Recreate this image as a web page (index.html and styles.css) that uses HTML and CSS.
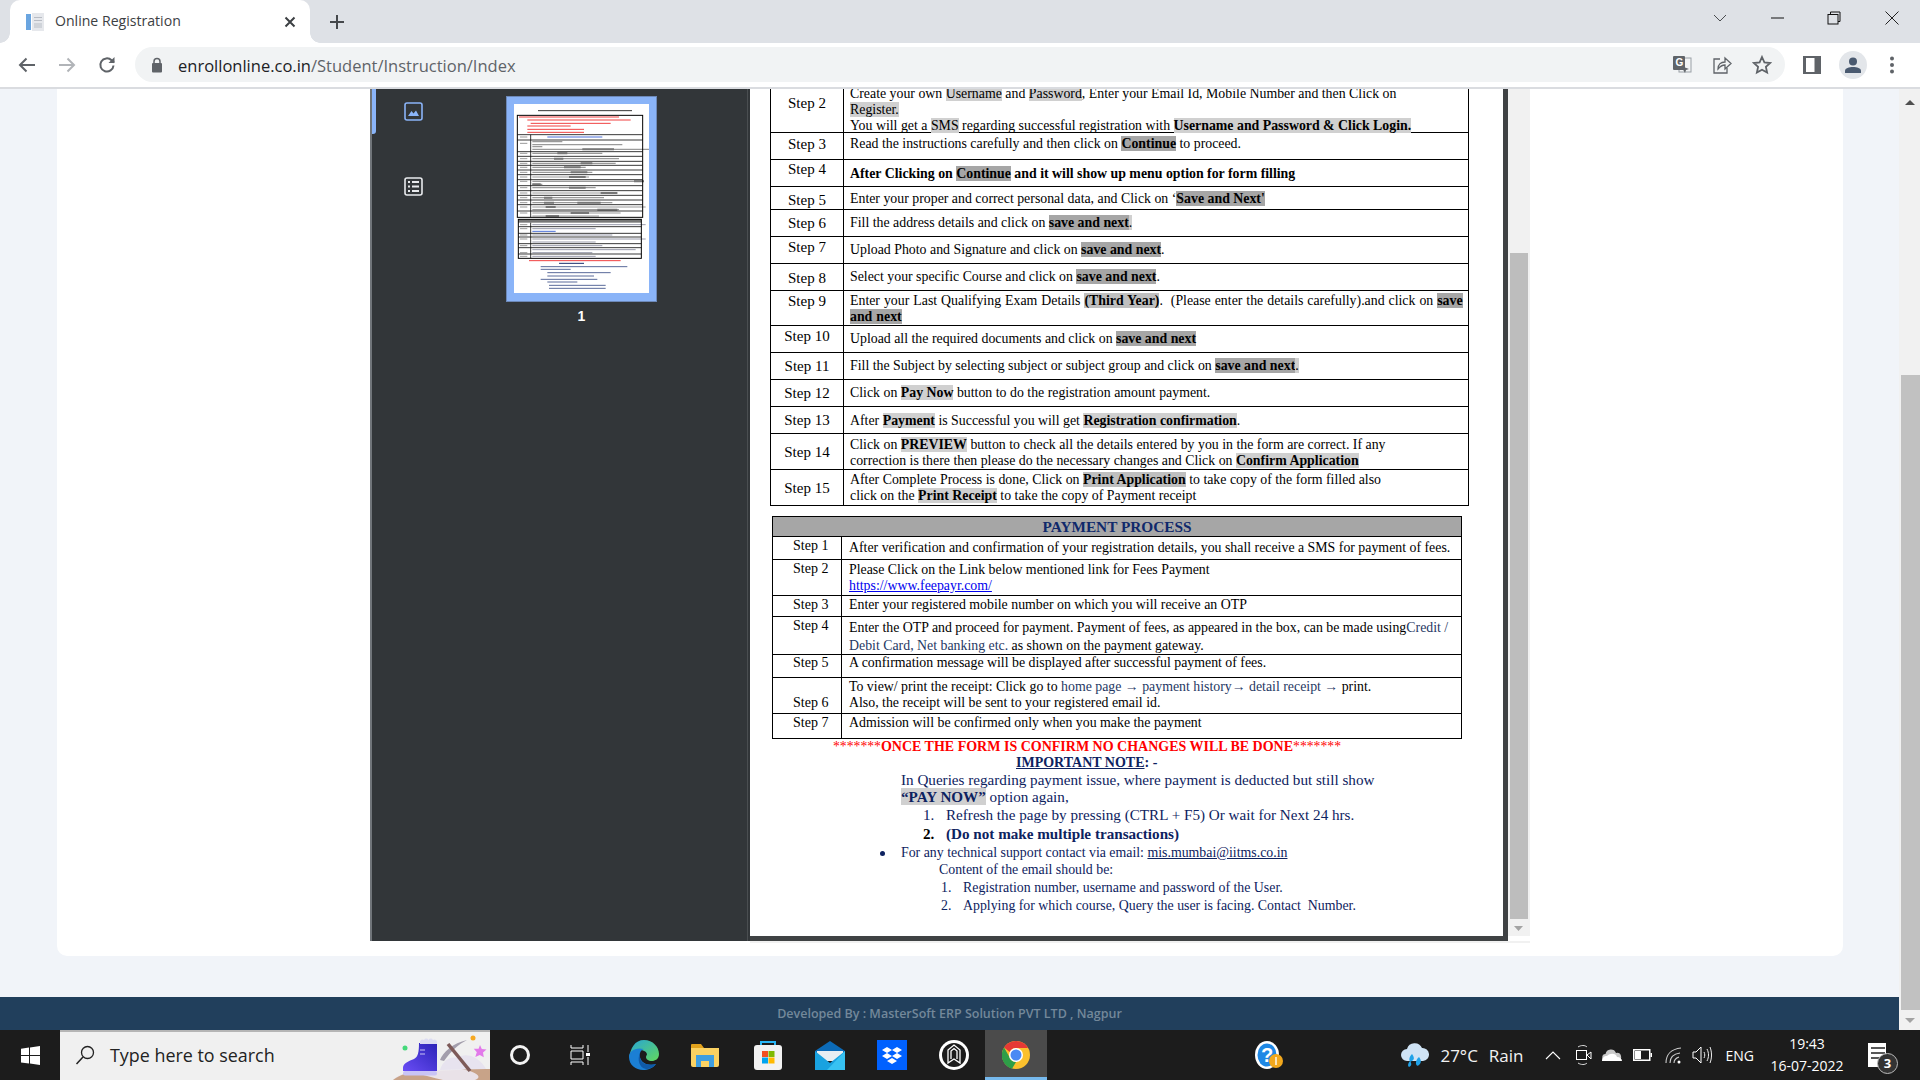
FILE: index.html
```html
<!DOCTYPE html>
<html lang="en">
<head>
<meta charset="utf-8">
<title>Online Registration</title>
<link rel="stylesheet" href="styles.css">
</head>
<body>
<div class="tabstrip">
  <div class="tab">
    <svg class="favicon" width="20" height="20" viewBox="0 0 20 20"><rect x="7" y="1" width="12" height="18" fill="#e6e8ec"/><rect x="9" y="5" width="8" height="1" fill="#b8bcc4"/><rect x="9" y="8" width="8" height="1" fill="#b8bcc4"/><rect x="9" y="11" width="8" height="5" fill="#cfd3d9"/><rect x="1" y="2" width="5" height="16" fill="#6aa5e0"/></svg>
    <span class="tab-title">Online Registration</span>
    <svg class="tab-x" width="12" height="12" viewBox="0 0 12 12"><path d="M1.5 1.5l9 9M10.5 1.5l-9 9" stroke="#3c4043" stroke-width="2"/></svg>
  </div>
  <svg class="newtab" width="16" height="16" viewBox="0 0 16 16"><path d="M8 1v14M1 8h14" stroke="#45484c" stroke-width="2"/></svg>
  <div class="winctl">
    <svg width="14" height="8" viewBox="0 0 14 8"><path d="M1 1l6 6 6-6" fill="none" stroke="#4a4d50"/></svg>
    <svg width="13" height="2" viewBox="0 0 13 2"><path d="M0 1h13" stroke="#111" stroke-width="1"/></svg>
    <svg width="14" height="14" viewBox="0 0 14 14"><path d="M3.5 3V1h9.500v9.500h-2" fill="none" stroke="#111"/><rect x="1" y="3.500" width="10" height="9.500" fill="none" stroke="#111"/></svg>
    <svg width="14" height="14" viewBox="0 0 14 14"><path d="M.5.500l13 13M13.500.500l-13 13" stroke="#222" stroke-width="1"/></svg>
  </div>
</div>

<div class="toolbar">
  <svg class="nav" width="18" height="16" viewBox="0 0 18 16"><path d="M17 8H2M8.500 1.500L2 8l6.500 6.500" fill="none" stroke="#5f6368" stroke-width="2"/></svg>
  <svg class="nav" width="18" height="16" viewBox="0 0 18 16"><path d="M1 8h15M9.500 1.500L16 8l-6.500 6.500" fill="none" stroke="#b1b4b8" stroke-width="2"/></svg>
  <svg class="nav" width="18" height="18" viewBox="0 0 18 18"><path d="M15.500 9.500a6.600 6.600 0 1 1-1.900-5.200L16 6.500" fill="none" stroke="#5f6368" stroke-width="2"/><path d="M16.500 1v6h-6z" fill="#5f6368"/></svg>
  <div class="omnibox">
    <svg class="lock" width="12" height="16" viewBox="0 0 12 16"><path d="M3 7V4.500a3 3 0 0 1 6 0V7" fill="none" stroke="#5f6368" stroke-width="1.500"/><rect x="1" y="6" width="10" height="9.500" rx="1" fill="#5f6368"/></svg>
    <span class="url"><span class="dom">enrollonline.co.in</span>/Student/Instruction/Index</span>
    <span class="omni-icons">
      <svg width="20" height="20" viewBox="0 0 20 20"><rect x="7" y="3" width="12" height="14" fill="#f1f3f4" stroke="#9aa0a6"/><rect x="1" y="1" width="12" height="14" rx="1" fill="#5f6368"/><text x="3.500" y="11" class="g-mark">G</text><path d="M9 11l4 7 1-3 3-1z" fill="#5f6368"/></svg>
      <svg width="20" height="20" viewBox="0 0 20 20"><path d="M8 4H2v14h13v-5" fill="none" stroke="#5f6368" stroke-width="1.300"/><path d="M6 14c0-5 3-7 7-7V3l6 5.500-6 5.500V10c-3 0-5 1.500-7 4z" fill="none" stroke="#5f6368" stroke-width="1.300"/></svg>
      <svg width="20" height="20" viewBox="0 0 20 20"><path d="M10 2l2.400 5.400 5.800.6-4.300 3.900 1.200 5.700L10 14.700 4.900 17.600l1.200-5.700L1.800 8l5.800-.6z" fill="none" stroke="#5f6368" stroke-width="1.800"/></svg>
    </span>
  </div>
  <svg class="panel" width="18" height="18" viewBox="0 0 18 18"><rect width="18" height="18" fill="#5f6368"/><rect x="3" y="2" width="8.500" height="14" fill="#fff"/></svg>
  <div class="avatar"><svg width="16" height="16" viewBox="0 0 16 16"><circle cx="8" cy="4.500" r="4" fill="#4a5a70"/><path d="M0 16v-2c0-3 4-4 8-4s8 1 8 4v2z" fill="#4a5a70"/></svg></div>
  <svg class="menu" width="4" height="18" viewBox="0 0 4 18"><circle cx="2" cy="2.500" r="2" fill="#5f6368"/><circle cx="2" cy="9" r="2" fill="#5f6368"/><circle cx="2" cy="15.500" r="2" fill="#5f6368"/></svg>
</div>

<div class="window">
  <div class="site">
    <div class="content">
      <div class="card">
        <div class="viewer">
          <aside class="sidebar">
            <div class="side-thumb"></div>
            <div class="side-icons">
              <svg width="19" height="19" viewBox="0 0 19 19"><rect x="1" y="1" width="17" height="17" rx="2" fill="none" stroke="#8ab4f8" stroke-width="1.600"/><path d="M4 14l3.500-5 2 2.500L12 8.500 15 14z" fill="#8ab4f8"/></svg>
              <svg width="19" height="19" viewBox="0 0 19 19"><rect x="1" y="1" width="17" height="17" rx="2" fill="none" stroke="#e8eaed" stroke-width="1.600"/><path d="M4 5h2M8 5h7M4 9.500h2M8 9.500h7M4 14h2M8 14h7" stroke="#e8eaed" stroke-width="1.800"/></svg>
            </div>
            <div class="thumb-col">
              <div class="thumb">
                <svg class="thumb-doc" width="135" height="189" viewBox="0 0 405 567">
                  <path d="M72 20h282" stroke="#333" stroke-width="3"/>
                  <path d="M15 39h300M40 48h310M50 58h240M40 66h130M40 76h170M40 85h170" stroke="#f04040" stroke-width="3"/>
                  <path d="M100 99h165" stroke="#4a6fd8" stroke-width="3"/>
                  <path d="M55 113h90M55 122h270M55 128h30M55 136h350M55 148h210M55 164h260M55 178h250M55 190h160M55 205h180M55 219h170M55 232h330M55 241h30M55 251h190M55 267h255M55 281h215M55 296h240M55 309h340M55 317h260M55 327h265M55 336h200" stroke="#9a9a9a" stroke-width="3.500"/>
                  <path d="M55 362h340M55 374h190M55 393h240M55 405h340M55 414h190M55 425h210M55 437h310M55 446h180M55 457h190" stroke="#9a9cac" stroke-width="3"/>
                  <path d="M55 382h70" stroke="#4a6fd8" stroke-width="3"/>
                  <path d="M18 99h22M18 118h22M18 148h22M18 164h22M18 178h22M18 190h22M18 205h22M18 219h22M18 232h22M18 251h22M18 267h22M18 281h22M18 296h22M18 309h22M18 327h22M18 362h22M18 374h22M18 393h22M18 405h22M18 425h22M18 446h22M18 457h22" stroke="#999" stroke-width="3"/>
                  <path d="M205 136h95M130 148h30M120 164h28M200 178h35M150 190h50M170 205h50M165 219h50M360 232h30M55 241h25M165 251h50M260 267h50M90 281h25M90 296h30M190 296h70M95 309h30M250 317h60M170 327h55M95 336h40" stroke="#777" stroke-width="6"/>
                  <path d="M45 470h275" stroke="#f04040" stroke-width="3"/>
                  <path d="M135 478h75" stroke="#1b2e6b" stroke-width="3"/>
                  <path d="M80 488h260M80 496h90M100 506h190M100 516h140M80 526h170M100 534h90M105 544h170M105 553h170" stroke="#5a6a9a" stroke-width="3"/>
                  <rect x="10" y="34" width="376" height="306" fill="none" stroke="#000" stroke-width="3"/>
                  <path d="M10 92h376M10 108h376M10 143h376M10 157h376M10 172h376M10 184h376M10 198h376M10 212h376M10 227h376M10 245h376M10 260h376M10 274h376M10 288h376M10 302h376M10 321h376M50 92v248" stroke="#111" stroke-width="2.500"/>
                  <rect x="13" y="346" width="369" height="10" fill="#777"/>
                  <rect x="13" y="346" width="369" height="117" fill="none" stroke="#000" stroke-width="3"/>
                  <path d="M13 368h369M13 388h369M13 399h369M13 419h369M13 431h369M13 450h369M50 356v107" stroke="#111" stroke-width="2.500"/>
                </svg>
              </div>
              <div class="thumb-num">1</div>
            </div>
          </aside>
          <div class="docview">
            <div class="docmain">
              <div class="pdfpage">
                <div class="t1">
                  <div class="row h60"><div class="lab p23">Step 2</div><div class="txt p13">Create your own <span class="hl">Username</span> and <span class="hl">Password</span>, Enter your Email Id, Mobile Number and then Click on<br><span class="hl">Register.</span><br>You will get a <span class="hl">SMS</span> regarding successful registration with <b class="hl">Username and Password &amp; Click Login.</b></div></div>
                  <div class="row h27"><div class="lab p4">Step 3</div><div class="txt p3">Read the instructions carefully and then click on <b class="hd">Continue</b> to proceed.</div></div>
                  <div class="row h27"><div class="lab p2">Step 4</div><div class="txt p6"><b>After Clicking on <span class="hd">Continue</span> and it will show up menu option for form filling</b></div></div>
                  <div class="row h23"><div class="lab p6">Step 5</div><div class="txt p4">Enter your proper and correct personal data, and Click on ‘<b class="hd">Save and Next'</b></div></div>
                  <div class="row h27"><div class="lab p6">Step 6</div><div class="txt p5">Fill the address details and click on <b class="hd">save and next</b><span class="hl">.</span></div></div>
                  <div class="row h27"><div class="lab p3">Step 7</div><div class="txt p5">Upload Photo and Signature and click on <b class="hd">save and next</b>.</div></div>
                  <div class="row h27"><div class="lab p7">Step 8</div><div class="txt p5">Select your specific Course and click on <b class="hd">save and next</b>.</div></div>
                  <div class="row h35"><div class="lab p3">Step 9</div><div class="txt p2 just">Enter your Last Qualifying Exam Details <b class="hm">(Third Year)</b>.&nbsp; (Please enter the details carefully).and click on <b class="hd">save</b><br><b class="hd">and next</b></div></div>
                  <div class="row h27"><div class="lab p3">Step 10</div><div class="txt p5">Upload all the required documents and click on <b class="hd">save and next</b></div></div>
                  <div class="row h27"><div class="lab p6">Step 11</div><div class="txt p5">Fill the Subject by selecting subject or subject group and click on <b class="hd">save and next</b><span class="hl">.</span></div></div>
                  <div class="row h27"><div class="lab p6">Step 12</div><div class="txt p5">Click on <b class="hl">Pay Now</b> button to do the registration amount payment.</div></div>
                  <div class="row h27"><div class="lab p6">Step 13</div><div class="txt p6">After <b class="hl">Payment</b> is Successful you will get <b class="hl">Registration confirmation</b>.</div></div>
                  <div class="row h36"><div class="lab p11">Step 14</div><div class="txt p3">Click on <b class="hl">PREVIEW</b> button to check all the details entered by you in the form are correct. If any<br>correction is there then please do the necessary changes and Click on <b class="hl">Confirm Application</b></div></div>
                  <div class="row h35"><div class="lab p11">Step 15</div><div class="txt p2">After Complete Process is done, Click on <b class="hm">Print Application</b> to take copy of the form filled also<br>click on the <b class="hl">Print Receipt</b> to take the copy of Payment receipt</div></div>
                </div>

                <div class="t2">
                  <div class="t2-head">PAYMENT PROCESS</div>
                  <div class="row h23"><div class="lab2 p2">Step 1</div><div class="txt2 p4">After verification and confirmation of your registration details, you shall receive a SMS for payment of fees.</div></div>
                  <div class="row h36"><div class="lab2 p2">Step 2</div><div class="txt2 p3">Please Click on the Link below mentioned link for Fees Payment<br><a class="link" href="#">https://www.feepayr.com/</a></div></div>
                  <div class="row h21"><div class="lab2 p2">Step 3</div><div class="txt2 p2">Enter your registered mobile number on which you will receive an OTP</div></div>
                  <div class="row h38"><div class="lab2 p2">Step 4</div><div class="txt2 p3 lh18">Enter the OTP and proceed for payment. Payment of fees, as appeared in the box, can be made using<span class="navy">Credit /<br>Debit Card, Net banking etc.</span> as shown on the payment gateway.</div></div>
                  <div class="row h23"><div class="lab2 p1">Step 5</div><div class="txt2 p1">A confirmation message will be displayed after successful payment of fees.</div></div>
                  <div class="row h36"><div class="lab2 p18">Step 6</div><div class="txt2 p2">To view/ print the receipt: Click go to <span class="navy">home page → payment history→ detail receipt →</span> print.<br>Also, the receipt will be sent to your registered email id.</div></div>
                  <div class="row h24"><div class="lab2 p2">Step 7</div><div class="txt2 p2">Admission will be confirmed only when you make the payment</div></div>
                </div>

                <div class="notes">
                  <div class="warn mt1"><span class="stars">*******</span>ONCE THE FORM IS CONFIRM NO CHANGES WILL BE DONE<span class="stars">*******</span></div>
                  <div class="imp"><b><u>IMPORTANT NOTE</u>: -</b></div>
                  <div class="n1 mt1">In Queries regarding payment issue, where payment is deducted but still show</div>
                  <div class="n1 mt1"><b class="hl">“PAY NOW”</b> option again,</div>
                  <div class="nl mt2"><span class="num">1.</span>Refresh the page by pressing (CTRL + F5) Or wait for Next 24 hrs.</div>
                  <div class="nl mt3"><b class="num dark">2.</b><b>(Do not make multiple transactions)</b></div>
                  <div class="bul mt3"><span class="dot"></span>For any technical support contact via email: <u>mis.mumbai@iitms.co.in</u></div>
                  <div class="cont mt1">Content of the email should be:</div>
                  <div class="sub mt2"><span class="num2">1.</span>Registration number, username and password of the User.</div>
                  <div class="sub mt2"><span class="num2">2.</span>Applying for which course, Query the user is facing. Contact&nbsp; Number.</div>
                </div>
              </div>
              <div class="docbar"></div>
              <div class="vscroll">
                <svg class="arrow" width="9" height="5" viewBox="0 0 9 5"><path d="M0 0h9L4.500 5z" fill="#a3a3a3"/></svg>
              </div>
            </div>
            <div class="dark-edge"></div>
            <div class="light-edge"></div>
          </div>
        </div>
      </div>
    </div>
    <footer class="foot">Developed By : MasterSoft ERP Solution PVT LTD , Nagpur</footer>
  </div>
  <div class="pscroll">
    <svg class="pup" width="10" height="5" viewBox="0 0 10 5"><path d="M0 5h10L5 0z" fill="#505050"/></svg>
    <div class="pthumb"></div>
    <svg class="pdown" width="10" height="5" viewBox="0 0 10 5"><path d="M0 0h10L5 5z" fill="#a3a3a3"/></svg>
  </div>
</div>

<div class="taskbar">
  <div class="start"><svg width="19" height="19" viewBox="0 0 19 19"><path d="M0 2.700l8-1.100v7.500H0zM9 1.400L19 0v9.100H9zM0 10h8v7.500L0 16.400zM9 10h10v9L9 17.600z" fill="#fff"/></svg></div>
  <div class="search">
    <svg class="mag" width="20" height="20" viewBox="0 0 20 20"><circle cx="12.500" cy="7.500" r="6" fill="none" stroke="#222" stroke-width="1.300"/><path d="M8 12L1.500 19" stroke="#222" stroke-width="1.500"/></svg>
    <span class="search-text">Type here to search</span>
    <svg class="illus" width="97" height="50" viewBox="0 0 97 50">
      <defs><linearGradient id="bt" x1="0" y1="1" x2="1" y2="0"><stop offset="0" stop-color="#6a4df5"/><stop offset="1" stop-color="#2b23b8"/></linearGradient></defs>
      <path d="M0 50C5 44 15 42 30 41L97 39V50Z" fill="#e9e2e8"/>
      <path d="M0 50C8 44 14 43 20 43 30 44 40 48 50 50Z" fill="#c8a388"/>
      <path d="M68 39H97V50H82C90 47 84 42 68 39Z" fill="#c8a388"/>
      <path d="M47 40C50 30 58 26 64 28 72 22 86 26 93 39Z" fill="#e7e3ef"/>
      <path d="M26 13H44V41H10V38C10 33 16 31 21 29 25 27 26 22 26 13Z" fill="url(#bt)"/>
      <path d="M27 12a2.500 2.500 0 0 1 4-2 2.500 2.500 0 0 1 4.500 0 2.500 2.500 0 0 1 4.500 0 2.500 2.500 0 0 1 4 2v2H27z" fill="#dcdcf2"/>
      <path d="M27 20h5M27 24h5" stroke="#c9c4f5" stroke-width="1"/>
      <rect x="10" y="41" width="34" height="4.500" rx="2" fill="#c9c4f5"/>
      <circle cx="12" cy="18" r="2.500" fill="#45d97a"/><circle cx="80" cy="8" r="2.500" fill="#f6a821"/>
      <path d="M47 30C50 22 60 13 74 10 66 14 58 21 51 31Z" fill="#a39eac"/>
      <path d="M55 14L77 41" stroke="#7d5a58" stroke-width="3.500"/>
      <path d="M87 15l1.800 4 4.700.5-3.500 3 .8 4.800-4-2.400-4.500 2 1.500-4.700-3-3.500 4.800 0z" fill="#e27aea"/>
    </svg>
  </div>
  <div class="slot first"><span class="cortana"></span></div>
  <div class="slot"><svg class="tv" width="20" height="20" viewBox="0 0 20 20"><path d="M1 0v3h12V0M1 20v-3h12v3M1 6h12v8H1zM18 0v7M18 12v8" fill="none" stroke="#fff" stroke-width="1"/><rect x="16" y="8" width="4" height="3" fill="#fff"/></svg></div>
  <div class="slot"><svg width="30" height="30" viewBox="0 0 30 30"><defs><linearGradient id="eg" x1="0" y1="0" x2="1" y2="1"><stop offset="0" stop-color="#27a4d8"/><stop offset="1" stop-color="#62d85c"/></linearGradient></defs><path d="M15 0c9 0 15 7 15 14 0 5-4 7-7 7-4 0-6-2-6-4 0-1 1-2 1-3-1-3-4-4-7-4-5 0-10 4-11 9C1 8 6 0 15 0z" fill="url(#eg)"/><path d="M0 17C0 25 7 30 14 30c5 0 10-2 13-6-3 1-7 1-10 0-5-2-7-7-6-11 1-3 3-4 4-4C6 7 0 11 0 17z" fill="#1b7fd4"/><path d="M11 13c-1 5 1 10 6 11 3 1 7 1 10 0-3 4-7 5-10 5-7-1-9-10-6-16z" fill="#0f5aa8"/></svg></div>
  <div class="slot"><svg class="fold" width="28" height="23" viewBox="0 0 28 23"><path d="M0 1a1 1 0 0 1 1-1h9l3 4h15v4H0z" fill="#e2a21c"/><path d="M0 4h28v17a2 2 0 0 1-2 2H2a2 2 0 0 1-2-2z" fill="#fbd262"/><path d="M5 11h18v12h-5v-6h-8v6H5z" fill="#3f9ee0"/></svg></div>
  <div class="slot"><svg width="30" height="30" viewBox="0 0 30 30"><path d="M8 6V2h14v4" fill="none" stroke="#29b6f6" stroke-width="2"/><rect x="1" y="5" width="28" height="25" rx="3" fill="#f2f2f2"/><rect x="9" y="11" width="6" height="6" fill="#f25022"/><rect x="15.500" y="11" width="6" height="6" fill="#7fba00"/><rect x="9" y="17.500" width="6" height="6" fill="#00a4ef"/><rect x="15.500" y="17.500" width="6" height="6" fill="#ffb900"/></svg></div>
  <div class="slot"><svg width="30" height="29" viewBox="0 0 30 29"><path d="M15 0l15 10v2H0v-2z" fill="#0c6bb8"/><path d="M2 10h26v10H2z" fill="#e8eef2"/><path d="M0 10l15 12 15-12v19H0z" fill="#19a2e0"/><path d="M30 10v19H12z" fill="#37c2f2"/></svg></div>
  <div class="slot"><svg width="30" height="30" viewBox="0 0 30 30"><rect width="30" height="30" fill="#0061ff"/><path d="M10 7l5 3-5 3-5-3zM20 7l5 3-5 3-5-3zM10 13l5 3-5 3-5-3zM20 13l5 3-5 3-5-3zM15 18l5 3-5 3-5-3z" fill="#fff"/></svg></div>
  <div class="slot"><svg width="30" height="30" viewBox="0 0 30 30"><circle cx="15" cy="15" r="15" fill="#fff"/><circle cx="15" cy="15" r="12" fill="#1c1c1c"/><path d="M9 23V10l6-5 6 5v13l-6-4zM12 19V11l3-2.500 3 2.500v8" fill="none" stroke="#fff" stroke-width="1.300"/></svg></div>
  <div class="slot active"><svg width="28" height="28" viewBox="0 0 28 28"><circle cx="14" cy="14" r="14" fill="#fbc02d"/><path d="M14 0a14 14 0 0 1 12.100 7H14a7 7 0 0 0-6.300 4L2.100 6.500A14 14 0 0 1 14 0z" fill="#e53935"/><path d="M2.100 6.500L8 17a7 7 0 0 0 6 4l-4 6.700A14 14 0 0 1 2.100 6.500z" fill="#2e9e48"/><circle cx="14" cy="14" r="7" fill="#fff"/><circle cx="14" cy="14" r="5.500" fill="#4a8af4"/></svg></div>
  <div class="help"><svg width="29" height="30" viewBox="0 0 29 30"><ellipse cx="12" cy="15" rx="12" ry="14" fill="#fff"/><ellipse cx="12" cy="15" rx="9.500" ry="11.500" fill="#1e88e5"/><text x="12" y="22" class="q">?</text><circle cx="21" cy="21" r="7" fill="#f2a81d"/><rect x="20.300" y="17" width="1.400" height="8" fill="#fff"/></svg></div>
  <div class="tray">
    <svg class="w" width="28" height="28" viewBox="0 0 28 28"><path d="M6 20a6 6 0 0 1 0-12 8 8 0 0 1 15-1 6.500 6.500 0 0 1 1 13z" fill="#cfe3f5"/><path d="M11 13c2 3 3 5 0 7s-4-3 0-7zM18 16c2 3 3 5 0 8s-5-4 0-8zM9 20c1.500 2 2 4 0 5.500S6 23 9 20z" fill="#1fa2e8"/></svg>
    <span class="temp">27°C</span><span class="rain">Rain</span>
    <svg class="chev" width="16" height="9" viewBox="0 0 16 9"><path d="M1 8l7-7 7 7" fill="none" stroke="#fff" stroke-width="1.100"/></svg>
    <svg class="meet" width="16" height="20" viewBox="0 0 16 20"><path d="M2 2c3-2 7-2 9 0M2 18c3 2 7 2 9 0" fill="none" stroke="#ddd"/><rect x=".5" y="5.500" width="10" height="9" fill="none" stroke="#fff"/><path d="M11 10l4-3v7z" fill="none" stroke="#fff"/></svg>
    <svg class="cloud" width="20" height="14" viewBox="0 0 20 14"><path d="M4 13a3.500 3.500 0 0 1-.5-7A5.500 5.500 0 0 1 14 5a4 4 0 0 1 2 8z" fill="#c9c9c9"/><path d="M0 13c0-3 2-5 5-5 3-3 9-3 10 1 3 0 5 2 5 4z" fill="#fff"/></svg>
    <svg class="batt" width="19" height="12" viewBox="0 0 19 12"><rect x=".750" y=".750" width="16" height="10.500" fill="none" stroke="#fff" stroke-width="1.500"/><rect x="2" y="2" width="6" height="8" fill="#fff"/><rect x="17.500" y="4" width="1.500" height="4" fill="#fff"/></svg>
    <svg class="wifi" width="17" height="17" viewBox="0 0 17 17"><path d="M1 16C1 8 6 2 16 1M5 16c0-5 3-9 10-10M9 16c0-3 2-5 5-6" fill="none" stroke="#cfcfcf" stroke-width="1.100"/><circle cx="14" cy="15" r="1.500" fill="#fff"/></svg>
    <svg class="vol" width="20" height="18" viewBox="0 0 20 18"><path d="M1 6h3l5-5v16l-5-5H1z" fill="none" stroke="#fff"/><path d="M12 6c1 2 1 4 0 6M15 3c2 4 2 8 0 12M18 1c2 5 2 11 0 16" fill="none" stroke="#eee"/></svg>
    <span class="eng">ENG</span>
    <div class="clock"><span>19:43</span><span>16-07-2022</span></div>
    <div class="notif"><svg width="18" height="24" viewBox="0 0 18 24"><path d="M0 0h20v24H0z" fill="#fff"/><path d="M3 5h14M3 10h14M3 15h10" stroke="#222" stroke-width="1.300"/></svg><span class="badge">3</span></div>
  </div>
</div>
</body>
</html>
```
FILE: styles.css
```css
* { box-sizing: border-box; }
html, body { margin: 0; height: 100%; overflow: hidden; }
body { width: 1920px; height: 1080px; display: flex; flex-direction: column; font-family: "Open Sans", sans-serif; background: #f1f4f9; }

/* browser chrome */
.tabstrip { height: 43px; background: #dee1e6; display: flex; align-items: center; flex: none; }
.tab { position: relative; margin-left: 10px; width: 300px; height: 43px; background: #fff; border-radius: 10px 10px 0 0; display: flex; align-items: center; padding-left: 15px; }
.tab::before, .tab::after { content: ""; position: absolute; bottom: 0; width: 10px; height: 10px; }
.tab::before { left: -10px; background: radial-gradient(circle at 0 0, #dee1e6 9.500px, #fff 10px); }
.tab::after { right: -10px; background: radial-gradient(circle at 100% 0, #dee1e6 9.500px, #fff 10px); }
.favicon { flex: none; }
.tab-title { margin: 0 0 2px 10px; font-size: 14.100px; color: #3c4043; white-space: nowrap; }
.tab-x { margin-left: auto; margin-right: 14px; }
.newtab { margin-left: 19px; }
.winctl { margin-left: auto; width: 236px; padding: 0 21px 7px 29px; display: flex; justify-content: space-between; align-items: center; height: 43px; }

.toolbar { height: 46px; background: #fff; border-bottom: 2px solid #dadce0; display: flex; align-items: center; flex: none; padding-bottom: 1px; }
.nav { flex: none; margin-left: 18px; margin-right: 4px; }
.nav:first-child { margin-left: 18px; }
.omnibox { margin-left: 15px; width: 1650px; height: 35px; border-radius: 18px; background: #f1f3f4; display: flex; align-items: center; padding-left: 16px; }
.lock { flex: none; }
.url { margin: 1px 0 0 15px; font-size: 16.500px; color: #5f6368; white-space: nowrap; }
.dom { color: #202124; }
.omni-icons { margin-left: auto; margin-right: 13px; display: flex; gap: 20px; align-items: center; }
.g-mark { font: bold 10px "Liberation Sans", sans-serif; fill: #fff; }
.panel { margin-left: 18px; flex: none; }
.avatar { margin-left: 18px; width: 28px; height: 28px; border-radius: 50%; background: #e3e6ea; display: flex; align-items: center; justify-content: center; flex: none; }
.menu { margin-left: 23px; flex: none; }

/* page */
.window { flex: 1; display: flex; min-height: 0; }
.site { flex: 1; display: flex; flex-direction: column; min-width: 0; }
.content { height: 908px; padding-left: 57px; padding-right: 56px; flex: none; }
.card { height: 867px; background: #fff; border-radius: 0 0 10px 10px; padding-left: 313px; }
.foot { height: 33px; background: #213f5c; color: #73889a; font-size: 12.500px; font-weight: 600; display: flex; align-items: center; justify-content: center; padding-bottom: 1px; }
.pscroll { width: 21px; background: #f1f1f1; position: relative; flex: none; display: flex; flex-direction: column; align-items: center; }
.pup { margin-top: 11px; }
.pthumb { margin-top: 270px; width: 19px; height: 635px; background: #c1c1c1; margin-left: 2px; }
.pdown { margin-top: 8px; }

/* PDF viewer */
.viewer { width: 1160px; height: 854px; display: flex; }
.sidebar { width: 380px; height: 852px; background: #323639; display: flex; flex: none; border-left: 2px solid #70757a; position: relative; }
.sidebar::after { content: ""; position: absolute; top: 0; bottom: 0; right: 2px; width: 1px; background: #4a4e51; }
.side-thumb { position: absolute; left: 0; top: 0; width: 4px; height: 45px; background: #8ab4f8; border-radius: 0 0 3px 0; }
.side-icons { width: 134px; flex: none; padding: 13px 0 0 32px; display: flex; flex-direction: column; gap: 56px; }
.thumb-col { display: flex; flex-direction: column; align-items: flex-start; padding-top: 7px; }
.thumb { width: 151px; height: 206px; background: #8ab4f8; border: 1px solid #6d89b8; padding: 7px; }
.thumb-doc { display: block; background: #fff; filter: blur(.4px); }
.thumb-num { width: 151px; text-align: center; color: #fff; font: bold 14px/16px "Liberation Sans", sans-serif; margin-top: 6px; }
.docview { flex: 1; min-width: 0; display: flex; flex-direction: column; }
.docmain { height: 847px; display: flex; overflow: hidden; flex: none; }
.pdfpage { width: 753px; background: #fff; overflow: hidden; flex: none; font-family: "Liberation Serif", serif; color: #000; }
.docbar { width: 5px; background: #3f4244; flex: none; }
.vscroll { flex: 1; background: #f1f1f1; position: relative; padding-top: 164px; }
.vscroll::before { content: ""; display: block; width: 18px; height: 666px; margin-left: 2px; background: #bdbdbd; }
.arrow { display: block; margin: 7px 0 0 6px; }
.dark-edge { height: 5px; background: #3f4244; width: 758px; flex: none; }
.light-edge { height: 2px; background: #f1f1f1; flex: none; }

/* tables */
.t1 { width: 699px; margin: -16px 0 0 20px; border: 1px solid #000; border-top: 0; }
.t2 { width: 690px; margin: 10px 0 0 22px; border: 1px solid #000; }
.t2-head { height: 20px; background: #a6a6a6; text-align: center; color: #10296b; font: bold 15.300px/20px "Liberation Serif", serif; border-bottom: 1px solid #000; }
.row { display: flex; border-bottom: 1px solid #000; }
.row:last-child { border-bottom: 0; }
.h21 { height: 21px; } .h23 { height: 23px; } .h24 { height: 24px; } .h27 { height: 27px; }
.h35 { height: 35px; } .h36 { height: 36px; } .h38 { height: 38px; } .h60 { height: 60px; }
.lab { width: 73px; flex: none; text-align: center; font-size: 15px; line-height: 14px; border-right: 1px solid #000; }
.txt { flex: 1; padding-left: 6px; font-size: 13.850px; line-height: 16px; white-space: nowrap; }
.just { word-spacing: .5px; }
.lab2 { width: 69px; flex: none; padding-left: 20px; font-size: 14px; line-height: 14px; border-right: 1px solid #000; }
.txt2 { flex: 1; padding-left: 7px; font-size: 13.850px; line-height: 16px; white-space: nowrap; position: relative; top: -1px; }
.lh18 { line-height: 18px; }
.p1 { padding-top: 1px; } .p2 { padding-top: 2px; } .p3 { padding-top: 3px; } .p4 { padding-top: 4px; } .p5 { padding-top: 5px; }
.p6 { padding-top: 6px; } .p7 { padding-top: 7px; } .p11 { padding-top: 11px; } .p13 { padding-top: 13px; } .p18 { padding-top: 18px; } .p23 { padding-top: 23px; }
.hl { background: #d0d0d0; } .hm { background: #bfbfbf; } .hd { background: #a6a6a6; }
.link { color: #0000ee; }
.navy { color: #1f3864; }

/* notes */
.notes { color: #0d2260; line-height: 16px; white-space: nowrap; margin-top: -1px; }
.mt1 { margin-top: 1px; } .mt2 { margin-top: 2px; } .mt3 { margin-top: 3px; }
.warn { margin-left: 83px; color: #ff0000; font-weight: bold; font-size: 14px; }
.stars { font-weight: normal; font-size: 13.700px; }
.imp { margin-left: 266px; font-size: 14px; }
.n1 { margin-left: 151px; font-size: 15.150px; }
.nl { margin-left: 173px; font-size: 15.150px; display: flex; }
.num { width: 23px; flex: none; }
.dark { color: #000; }
.bul { margin-left: 151px; font-size: 13.850px; position: relative; }
.dot { position: absolute; left: -21px; top: 6px; width: 5px; height: 5px; border-radius: 50%; background: #0d2260; }
.cont { margin-left: 189px; font-size: 13.850px; }
.sub { margin-left: 191px; font-size: 13.850px; display: flex; }
.num2 { width: 22px; flex: none; }

/* taskbar */
.taskbar { height: 50px; background: #1c1c1c; display: flex; flex: none; color: #fff; }
.start { width: 60px; display: flex; align-items: center; justify-content: center; }
.search { width: 430px; background: #f0f0f0; border-top: 2px solid #b5b5b5; display: flex; align-items: center; padding: 0 0 2px 15px; position: relative; overflow: hidden; }
.search-text { margin-left: 15px; font-size: 17.900px; color: #222; white-space: nowrap; }
.illus { position: absolute; right: 0; top: -2px; }
.slot { width: 62px; flex: none; display: flex; align-items: center; justify-content: center; }
.first { margin-left: -1px; }
.tv { margin-right: 4px; }
.fold { margin-right: 2px; }
.active { background: #4b4b4b; border-bottom: 3px solid #76b9ed; padding-top: 3px; }
.cortana { width: 20px; height: 20px; border: 3px solid #f2f2f2; border-radius: 50%; }
.help { width: 29px; margin-left: 208px; display: flex; align-items: center; flex: none; }
.q { font: bold 20px "Liberation Sans", sans-serif; fill: #fff; text-anchor: middle; }
.tray { margin-left: auto; display: flex; align-items: center; position: relative; padding-right: 32px; }
.w { margin-right: 11px; }
.temp, .rain { font-size: 17px; color: #f2f2f2; white-space: nowrap; padding-top: 1px; }
.rain { margin-left: 11px; }
.chev { margin-left: 21px; }
.meet { margin-left: 15px; }
.cloud { margin-left: 10px; }
.batt { margin-left: 11px; }
.wifi { margin-left: 13px; }
.vol { margin-left: 10px; }
.eng { margin-left: 14px; font-size: 14px; }
.clock { margin-left: 13px; width: 80px; display: flex; flex-direction: column; align-items: center; gap: 6px; font-size: 14px; line-height: 16px; }
.notif { margin-left: 21px; position: relative; width: 20px; height: 24px; }
.notif svg { display: block; }
.badge { position: absolute; left: 9px; top: 10px; width: 21px; height: 21px; border-radius: 50%; border: 1px solid #bbb; background: #333; text-align: center; font-size: 13px; font-weight: 700; line-height: 19px; }
```
